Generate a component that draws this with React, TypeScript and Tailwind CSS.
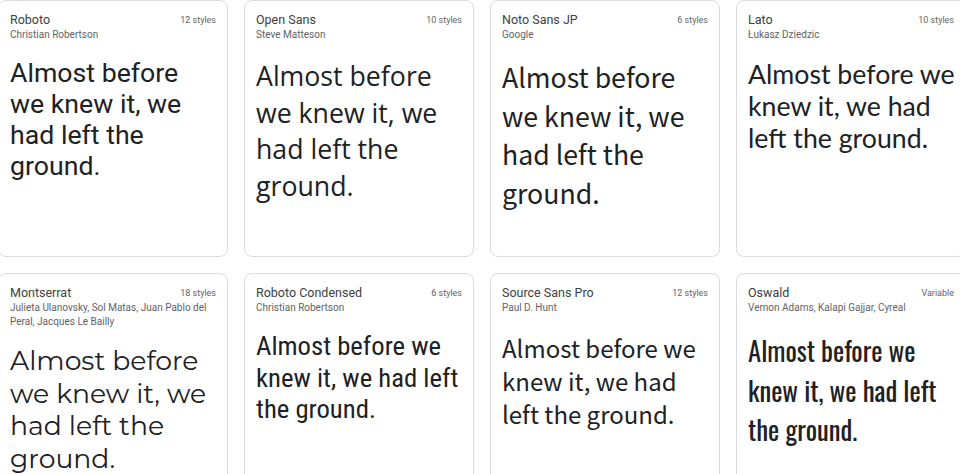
import React from "react";

interface FontCard {
  name: string;
  authors: string;
  styles: string;
  lines: string[];
  previewClass: string;
}

const cards: FontCard[] = [
  {
    name: "Roboto",
    authors: "Christian Robertson",
    styles: "12 styles",
    lines: ["Almost before", "we knew it, we", "had left the", "ground."],
    previewClass: "font-['Roboto',sans-serif] text-[26.7px] leading-[31px]",
  },
  {
    name: "Open Sans",
    authors: "Steve Matteson",
    styles: "10 styles",
    lines: ["Almost before", "we knew it, we", "had left the", "ground."],
    previewClass: "font-['Open_Sans',sans-serif] text-[26.7px] leading-[36.5px]",
  },
  {
    name: "Noto Sans JP",
    authors: "Google",
    styles: "6 styles",
    lines: ["Almost before", "we knew it, we", "had left the", "ground."],
    previewClass: "font-['Noto_Sans_CJK_JP',sans-serif] text-[26.7px] leading-[38.5px]",
  },
  {
    name: "Lato",
    authors: "Łukasz Dziedzic",
    styles: "10 styles",
    lines: ["Almost before we", "knew it, we had", "left the ground."],
    previewClass: "font-['Lato',sans-serif] text-[26.7px] leading-[32px]",
  },
  {
    name: "Montserrat",
    authors: "Julieta Ulanovsky, Sol Matas, Juan Pablo del Peral, Jacques Le Bailly",
    styles: "18 styles",
    lines: ["Almost before", "we knew it, we", "had left the", "ground."],
    previewClass: "font-['Montserrat','DejaVu_Sans',sans-serif] text-[26.7px] leading-[32.7px]",
  },
  {
    name: "Roboto Condensed",
    authors: "Christian Robertson",
    styles: "6 styles",
    lines: ["Almost before we", "knew it, we had left", "the ground."],
    previewClass:
      "font-['Roboto_Condensed','Liberation_Sans_Narrow',sans-serif] text-[26.7px] leading-[31.5px]",
  },
  {
    name: "Source Sans Pro",
    authors: "Paul D. Hunt",
    styles: "12 styles",
    lines: ["Almost before we", "knew it, we had", "left the ground."],
    previewClass: "font-['Source_Sans_Pro','Noto_Sans_CJK_JP',sans-serif] text-[24px] leading-[33px]",
  },
  {
    name: "Oswald",
    authors: "Vernon Adams, Kalapi Gajjar, Cyreal",
    styles: "Variable",
    lines: ["Almost before we", "knew it, we had left", "the ground."],
    previewClass:
      "font-['Oswald','Liberation_Sans_Narrow',sans-serif] font-normal text-[26.7px] leading-[39.5px]",
  },
];

const Card: React.FC<{ card: FontCard }> = ({ card }) => (
  <div className="h-[257px] overflow-hidden rounded-lg border border-[#dadce0] bg-white px-[11px] pt-[11px]">
    <div className="font-['Roboto',sans-serif]">
      <div className="flex items-start justify-between gap-2">
        <div className="text-[12.5px] leading-4 text-[#3c4043]">{card.name}</div>
        <div className="shrink-0 pt-[2px] text-[9px] leading-3 text-[#5f6368]">{card.styles}</div>
      </div>
      <div className="text-[10px] leading-[14px] text-[#5f6368]">{card.authors}</div>
    </div>
    <div className={`mt-4 whitespace-nowrap text-[#202124] ${card.previewClass}`}>
      {card.lines.map((line) => (
        <div key={line}>{line}</div>
      ))}
    </div>
  </div>
);

export default function App() {
  return (
    <div className="h-[474px] w-[960px] overflow-hidden bg-white">
      <div className="ml-[-2px] grid w-[968px] grid-cols-[repeat(4,230px)] gap-4">
        {cards.map((card) => (
          <Card key={card.name} card={card} />
        ))}
      </div>
    </div>
  );
}
